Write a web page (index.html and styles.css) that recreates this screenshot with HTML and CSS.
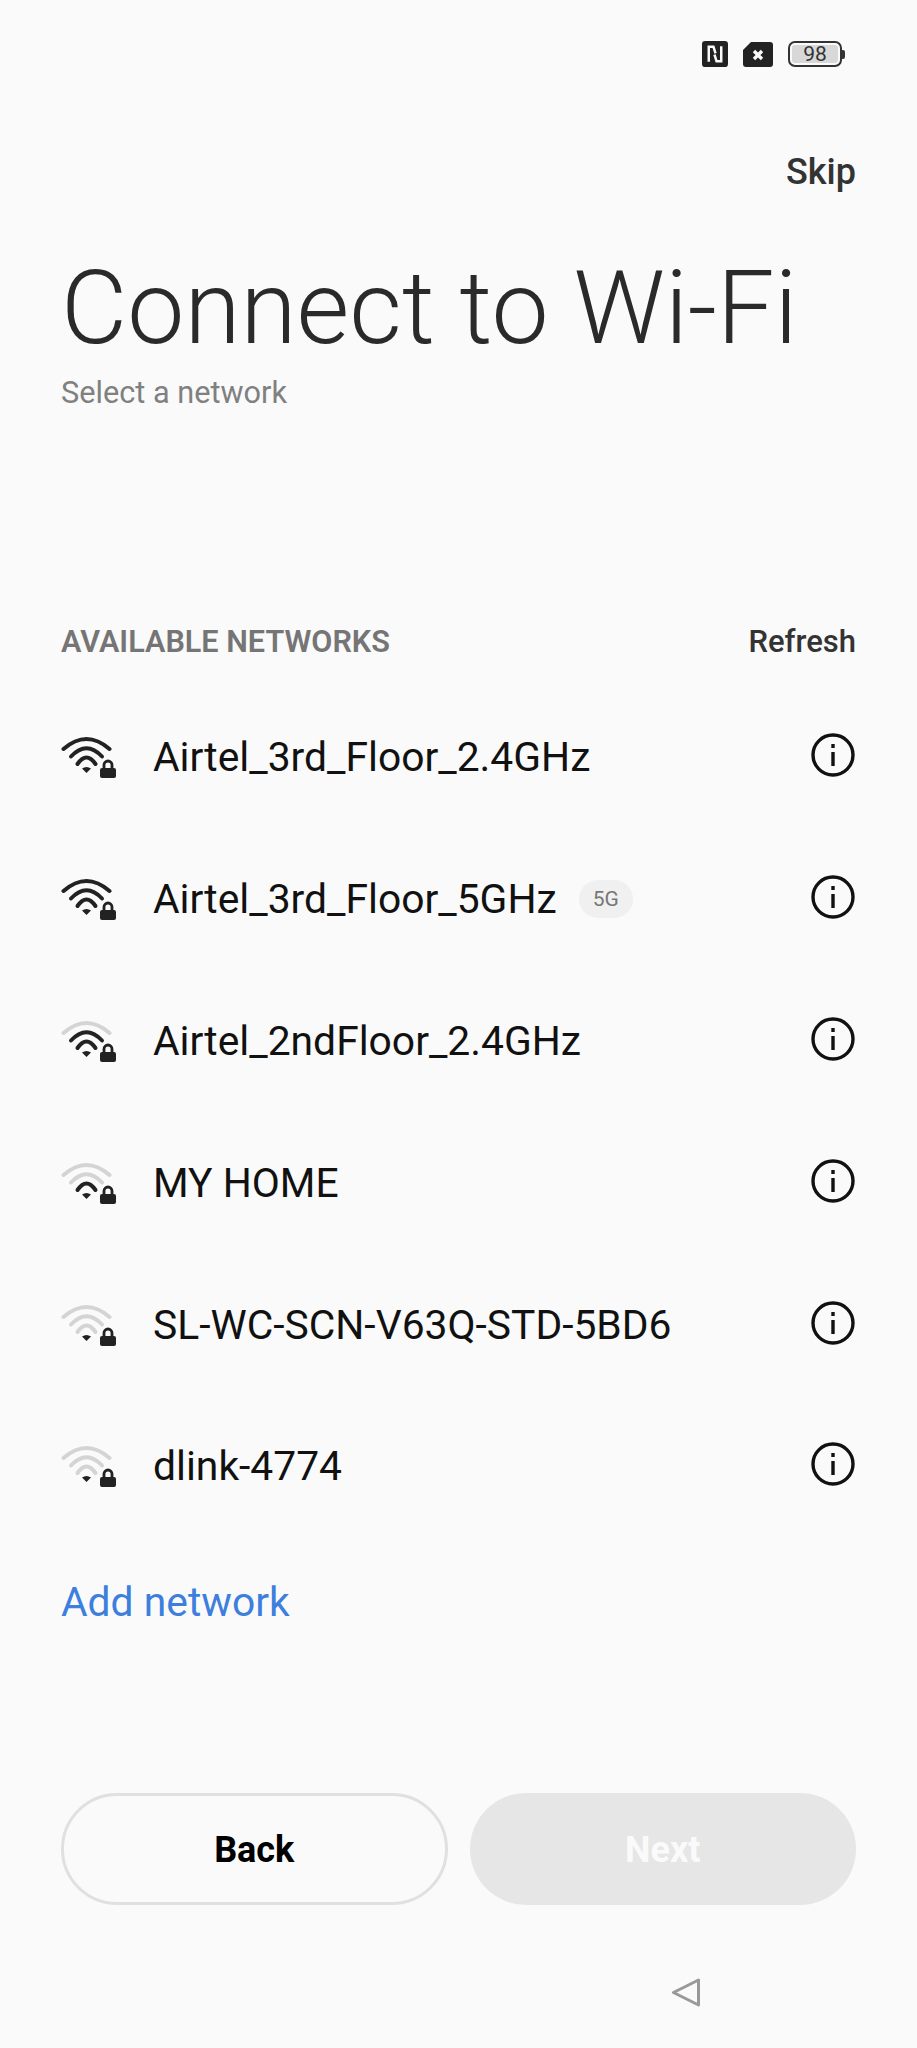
FILE: index.html
```html
<!DOCTYPE html>
<html lang="en">
<head>
    <meta charset="UTF-8">
    <title>Connect to Wi-Fi</title>
    <link rel="stylesheet" href="styles.css">
</head>
<body>
    <div class="screen">
        <div class="status">
            <svg class="st-nfc" viewBox="0 0 25 25"><rect width="25" height="25" rx="3" fill="#222"/><path d="M6.500 20V5.500H11L13 12M18.500 5V19.500H14L12 13" fill="none" stroke="#fafafa" stroke-width="2.400"/></svg>
            <svg class="st-sim" viewBox="0 0 30 25"><path d="M8 0H27a3 3 0 0 1 3 3V22a3 3 0 0 1-3 3H3a3 3 0 0 1-3-3V8z" fill="#222"/><path d="M11 9l8 8M19 9l-8 8" stroke="#fafafa" stroke-width="3.400"/></svg>
            <div class="battery"><span class="cell"><span class="level">98</span></span><span class="nub"></span></div>
        </div>
        <div class="skip-row"><span class="skip">Skip</span></div>
        <h1>Connect to Wi-Fi</h1>
        <p class="sub">Select a network</p>
        <div class="section">
            <span class="section-title">AVAILABLE NETWORKS</span>
            <span class="refresh">Refresh</span>
        </div>
        <ul class="networks">
            <li>
                <svg class="wifi" viewBox="1 0 58 44"><path class="arc" d="M3.500 14Q26.500 -6 49.500 14"/><path class="arc" d="M11 21.500Q26.500 5 42 21.500"/><path class="arc" d="M17.500 29Q26.500 16 35.500 29"/><path class="dot" d="M22 33.500Q26.500 30.500 31 33.500L26.500 38z"/><rect class="dot" x="40" y="33" width="16" height="10" rx="2"/><path class="shackle" d="M44 34v-4a4 4 0 0 1 8 0v4"/></svg>
                <span class="name">Airtel_3rd_Floor_2.4GHz</span>
                <svg class="info" viewBox="0 0 44 44"><circle cx="22" cy="22" r="20"/><path d="M22 19v14M22 11v4"/></svg>
            </li>
            <li>
                <svg class="wifi" viewBox="1 0 58 44"><path class="arc" d="M3.500 14Q26.500 -6 49.500 14"/><path class="arc" d="M11 21.500Q26.500 5 42 21.500"/><path class="arc" d="M17.500 29Q26.500 16 35.500 29"/><path class="dot" d="M22 33.500Q26.500 30.500 31 33.500L26.500 38z"/><rect class="dot" x="40" y="33" width="16" height="10" rx="2"/><path class="shackle" d="M44 34v-4a4 4 0 0 1 8 0v4"/></svg>
                <span class="name">Airtel_3rd_Floor_5GHz</span>
                <span class="tag">5G</span>
                <svg class="info" viewBox="0 0 44 44"><circle cx="22" cy="22" r="20"/><path d="M22 19v14M22 11v4"/></svg>
            </li>
            <li>
                <svg class="wifi" viewBox="1 0 58 44"><path class="arc off" d="M3.500 14Q26.500 -6 49.500 14"/><path class="arc" d="M11 21.500Q26.500 5 42 21.500"/><path class="arc" d="M17.500 29Q26.500 16 35.500 29"/><path class="dot" d="M22 33.500Q26.500 30.500 31 33.500L26.500 38z"/><rect class="dot" x="40" y="33" width="16" height="10" rx="2"/><path class="shackle" d="M44 34v-4a4 4 0 0 1 8 0v4"/></svg>
                <span class="name">Airtel_2ndFloor_2.4GHz</span>
                <svg class="info" viewBox="0 0 44 44"><circle cx="22" cy="22" r="20"/><path d="M22 19v14M22 11v4"/></svg>
            </li>
            <li>
                <svg class="wifi" viewBox="1 0 58 44"><path class="arc off" d="M3.500 14Q26.500 -6 49.500 14"/><path class="arc off" d="M11 21.500Q26.500 5 42 21.500"/><path class="arc" d="M17.500 29Q26.500 16 35.500 29"/><path class="dot" d="M22 33.500Q26.500 30.500 31 33.500L26.500 38z"/><rect class="dot" x="40" y="33" width="16" height="10" rx="2"/><path class="shackle" d="M44 34v-4a4 4 0 0 1 8 0v4"/></svg>
                <span class="name">MY HOME</span>
                <svg class="info" viewBox="0 0 44 44"><circle cx="22" cy="22" r="20"/><path d="M22 19v14M22 11v4"/></svg>
            </li>
            <li>
                <svg class="wifi" viewBox="1 0 58 44"><path class="arc off" d="M3.500 14Q26.500 -6 49.500 14"/><path class="arc off" d="M11 21.500Q26.500 5 42 21.500"/><path class="arc off" d="M17.500 29Q26.500 16 35.500 29"/><path class="dot" d="M22 33.500Q26.500 30.500 31 33.500L26.500 38z"/><rect class="dot" x="40" y="33" width="16" height="10" rx="2"/><path class="shackle" d="M44 34v-4a4 4 0 0 1 8 0v4"/></svg>
                <span class="name">SL-WC-SCN-V63Q-STD-5BD6</span>
                <svg class="info" viewBox="0 0 44 44"><circle cx="22" cy="22" r="20"/><path d="M22 19v14M22 11v4"/></svg>
            </li>
            <li>
                <svg class="wifi" viewBox="1 0 58 44"><path class="arc off" d="M3.500 14Q26.500 -6 49.500 14"/><path class="arc off" d="M11 21.500Q26.500 5 42 21.500"/><path class="arc off" d="M17.500 29Q26.500 16 35.500 29"/><path class="dot" d="M22 33.500Q26.500 30.500 31 33.500L26.500 38z"/><rect class="dot" x="40" y="33" width="16" height="10" rx="2"/><path class="shackle" d="M44 34v-4a4 4 0 0 1 8 0v4"/></svg>
                <span class="name">dlink-4774</span>
                <svg class="info" viewBox="0 0 44 44"><circle cx="22" cy="22" r="20"/><path d="M22 19v14M22 11v4"/></svg>
            </li>
        </ul>
        <div class="add">Add network</div>
        <div class="buttons">
            <button class="btn back">Back</button>
            <button class="btn next">Next</button>
        </div>
        <div class="navbar">
            <svg class="nav-back" viewBox="0 0 30 30"><path d="M2.500 14.500L27.500 2V27z"/></svg>
        </div>
    </div>
</body>
</html>
```
FILE: styles.css
```css
* {
    box-sizing: border-box;
}
body {
    margin: 0;
    background-color: #fafafa;
    font-family: Roboto, sans-serif;
    color: #111;
}
.screen {
    width: 917px;
    height: 2048px;
    padding: 41px 61px 0;
    overflow: hidden;
}
.status {
    display: flex;
    justify-content: flex-end;
    align-items: center;
    height: 26px;
    gap: 15px;
    padding-right: 11px;
}
.st-nfc {
    width: 26px;
    height: 26px;
}
.st-sim {
    width: 30px;
    height: 25px;
}
.battery {
    display: flex;
    align-items: center;
}
.cell {
    width: 54px;
    height: 26px;
    padding: 2px;
    border: 2px solid #333;
    border-radius: 7px;
}
.level {
    display: block;
    height: 18px;
    border-radius: 3px;
    background: #d8d8d8;
    font-size: 21px;
    line-height: 18px;
    text-align: center;
    color: #333;
}
.nub {
    width: 3px;
    height: 9px;
    background: #333;
    border-radius: 0 2px 2px 0;
}
.skip-row {
    display: flex;
    justify-content: flex-end;
    margin-top: 84px;
}
.skip {
    font-size: 36px;
    line-height: 42px;
    font-weight: 500;
    color: #333;
}
h1 {
    margin: 57px 0 0;
    font-size: 102px;
    line-height: 116px;
    font-weight: 300;
    color: #2a2a2a;
    white-space: nowrap;
}
.sub {
    margin: 9px 0 0;
    font-size: 30.700px;
    line-height: 36px;
    color: #808080;
}
.section {
    display: flex;
    justify-content: space-between;
    align-items: center;
    margin-top: 212px;
    height: 36px;
}
.section-title {
    font-size: 30.600px;
    font-weight: 600;
    color: #757575;
}
.refresh {
    font-size: 31px;
    font-weight: 500;
    color: #333;
}
.networks {
    list-style: none;
    margin: 27px 0 0;
    padding: 0;
}
.networks li {
    display: flex;
    align-items: center;
    height: 141.900px;
}
.wifi {
    width: 58px;
    height: 44px;
    margin-right: 34px;
    flex: none;
}
.arc {
    fill: none;
    stroke: #222;
    stroke-width: 4;
    stroke-linecap: round;
}
.arc.off {
    stroke: #d4d4d4;
}
.dot {
    fill: #222;
}
.shackle {
    fill: none;
    stroke: #222;
    stroke-width: 2.800;
}
.name {
    font-size: 40.800px;
    color: #111;
}
.tag {
    margin-left: 22px;
    width: 54px;
    height: 38px;
    line-height: 38px;
    border-radius: 19px;
    background: #f0f0f0;
    font-size: 21px;
    text-align: center;
    color: #777;
}
.info {
    width: 44px;
    height: 44px;
    margin: 0 1px 4px auto;
    fill: none;
    stroke: #111;
    stroke-width: 3.400;
}
.add {
    margin-top: 40px;
    font-size: 40.800px;
    line-height: 50px;
    color: #3d7fdc;
}
.buttons {
    display: grid;
    grid-template-columns: 1fr 1fr;
    gap: 22px;
    margin-top: 166px;
}
.btn {
    height: 112px;
    padding-top: 3px;
    border-radius: 56px;
    font-family: inherit;
    font-size: 36px;
    font-weight: 700;
}
.back {
    background: #fafafa;
    border: 3px solid #e0e0e0;
    color: #000;
}
.next {
    background: #e6e6e6;
    border: none;
    color: #fafafa;
}
.navbar {
    display: flex;
    margin-top: 73px;
}
.nav-back {
    width: 30px;
    height: 30px;
    margin-left: 610px;
    fill: none;
    stroke: #999;
    stroke-width: 3;
    stroke-linejoin: round;
}
```
